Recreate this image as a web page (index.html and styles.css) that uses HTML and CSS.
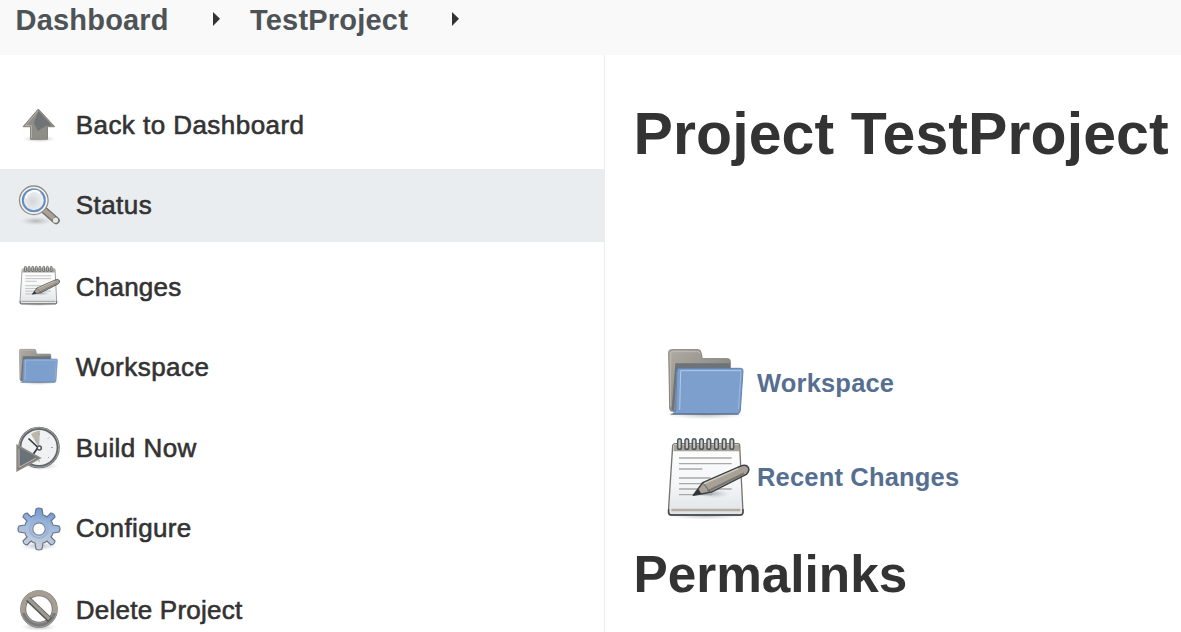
FILE: index.html
```html
<!DOCTYPE html>
<html lang="en">
<head>
<meta charset="utf-8">
<title>TestProject</title>
<link rel="stylesheet" href="styles.css">
</head>
<body>
<svg class="defs" width="0" height="0" aria-hidden="true">
  <defs>
    <linearGradient id="grey" x1="0" y1="0" x2="1" y2="1"><stop offset="0" stop-color="#b0aba1"/><stop offset="1" stop-color="#77787a"/></linearGradient>
    <linearGradient id="paper" x1="0" y1="0" x2="0" y2="1"><stop offset="0" stop-color="#ffffff"/><stop offset=".6" stop-color="#f3f5f7"/><stop offset="1" stop-color="#dfe3e6"/></linearGradient>
    <linearGradient id="gear" x1=".6" y1="0" x2=".4" y2="1"><stop offset="0" stop-color="#6f97cf"/><stop offset=".45" stop-color="#a3bbdc"/><stop offset="1" stop-color="#cfd3d8"/></linearGradient>
    <radialGradient id="glass" cx=".45" cy=".55" r=".6"><stop offset="0" stop-color="#d4d5d7"/><stop offset="1" stop-color="#f4f7fa"/></radialGradient>
    <radialGradient id="shade"><stop offset="0" stop-color="#8f969b" stop-opacity=".65"/><stop offset="1" stop-color="#b9c0c5" stop-opacity="0"/></radialGradient>
    <symbol id="folder" viewBox="45 36 246 220">
      <ellipse cx="167" cy="238" rx="122" ry="16" fill="url(#shade)"/>
      <path d="M56 52q0-8 8-8h80q8 0 9 8l4 19h76q8 0 8 8v150H67q-7 0-8-8z" fill="url(#grey)" stroke="#88857e" stroke-width="3"/>
      <path d="M62 215V56q0-6 6-6h75q5 0 6 6" fill="none" stroke="#cbc9c3" stroke-width="2"/>
      <path d="M76 85h164v25H80l-8 120-7-7z" fill="#6d7376"/>
      <path d="M88 100h184q8 0 7 9l-8 118q-1 9-9 9H68q8-1 9-12l4-116q0-8 7-8z" fill="#7c9fcd" stroke="#5c82b5" stroke-width="3"/>
      <path d="M89 225l3-118h181" fill="none" stroke="#c3d2e5" stroke-width="2.5"/>
      <path d="M273 109l-8 113" fill="none" stroke="#afc4df" stroke-width="2"/>
      <path d="M62 238h204" stroke="#525d69" stroke-width="2.5"/>
    </symbol>
    <symbol id="notepad" viewBox="45 34 258 250">
      <ellipse cx="165" cy="270" rx="115" ry="12" fill="url(#shade)"/>
      <path d="M74 54h190q5 0 5 6l10 199q0 9-8 9H63q-8 0-8-9L68 60q1-6 6-6z" fill="url(#paper)" stroke="#77736d" stroke-width="4"/>
      <path d="M56 250v9q0 9 8 9h207q8 0 8-9v-9" fill="none" stroke="#414446" stroke-width="4"/>
      <path d="M72 57h195l1 20H70z" fill="#a9a298"/>
      <path d="M64 253h207" stroke="#b3ada4" stroke-width="8"/>
      <g fill="#c9c8c4" stroke="#4e565a" stroke-width="4.5">
        <rect x="83" y="39" width="11" height="32" rx="5.5"/><rect x="105" y="39" width="11" height="32" rx="5.5"/><rect x="127" y="39" width="11" height="32" rx="5.5"/><rect x="149" y="39" width="11" height="32" rx="5.5"/><rect x="171" y="39" width="11" height="32" rx="5.5"/><rect x="194" y="39" width="11" height="32" rx="5.5"/><rect x="217" y="39" width="11" height="32" rx="5.5"/><rect x="240" y="39" width="11" height="32" rx="5.5"/>
      </g>
      <path d="M87 97h158M87 114h158M87 130h70M87 157h95M87 174h74M87 190h158M87 207h100" stroke="#aaa9a6" stroke-width="4"/>
      <ellipse cx="190" cy="204" rx="48" ry="14" fill="url(#shade)"/>
      <path d="M130 209l28-38 112-49q18-8 25 3 5 12-6 21l-106 54z" fill="#a8a196" stroke="#3b4145" stroke-width="4.5" stroke-linejoin="round"/>
      <path d="M161 175l104-46" stroke="#d0ccc4" stroke-width="4"/>
      <path d="M172 197l110-54" stroke="#777570" stroke-width="6"/>
      <path d="M130 209l15-19 9 14z" fill="#2f3438"/>
      <path d="M158 172q10 10 22 27" fill="none" stroke="#62615d" stroke-width="3"/>
    </symbol>
  </defs>
</svg>

<header class="breadcrumbs">
  <a class="crumb crumb-home">Dashboard</a>
  <svg class="caret" viewBox="0 0 7 14"><path d="M0 0l7 6.8L0 14z"/></svg>
  <a class="crumb crumb-project">TestProject</a>
  <svg class="caret" viewBox="0 0 7 14"><path d="M0 0l7 6.8L0 14z"/></svg>
</header>

<div class="page">
  <nav class="sidebar">
    <a class="task">
      <svg class="task-icon" viewBox="0 0 48 48">
        <ellipse cx="25" cy="38" rx="17" ry="3.5" fill="url(#shade)"/>
        <path d="M24.3 8L9 25.7h7.5v12.6h17V25.7h7.2z" fill="#8f8d88" stroke="#85827b"/>
        <path d="M24.3 10l13.5 14.5-6 .5-8 5-4-8z" fill="#656c72" opacity=".75"/>
        <path d="M24 10L11.5 24.7h6v12.5" fill="none" stroke="#b6b0a7"/>
      </svg>
      <span class="task-label">Back to Dashboard</span>
    </a>
    <a class="task task-active">
      <svg class="task-icon" viewBox="0 0 48 48">
        <ellipse cx="22" cy="39" rx="16" ry="4.5" fill="url(#shade)"/>
        <path d="M29.5 27.5L42 38.5" stroke="#77736d" stroke-width="7.5" stroke-linecap="round"/>
        <path d="M30 28l9.5 8" stroke="#aaa397" stroke-width="4.5"/>
        <circle cx="41.5" cy="38.2" r="2.6" fill="#e6e8e8"/>
        <circle cx="19.8" cy="18.3" r="14.3" fill="#f4f5f5" stroke="#918e88" stroke-width="1.3"/>
        <circle cx="19.8" cy="18.3" r="11" fill="url(#glass)" stroke="#668dbf" stroke-width="2"/>
        <path d="M12 16a8.5 8.5 0 0 1 14-5" fill="none" stroke="#fff" stroke-width="2"/>
      </svg>
      <span class="task-label">Status</span>
    </a>
    <a class="task">
      <svg class="task-icon" viewBox="0 0 48 48"><use href="#notepad" x="4" y="3.5" width="43" height="41"/></svg>
      <span class="task-label label-tight">Changes</span>
    </a>
    <a class="task">
      <svg class="task-icon" viewBox="0 0 48 48"><use href="#folder" x="3.5" y="5" width="42" height="37.5"/></svg>
      <span class="task-label">Workspace</span>
    </a>
    <a class="task">
      <svg class="task-icon" viewBox="0 0 48 48">
        <ellipse cx="27" cy="42" rx="18" ry="4" fill="url(#shade)"/>
        <circle cx="25" cy="23.5" r="19.2" fill="#eff1f2" stroke="#5f676b" stroke-width="3.2"/>
        <circle cx="25" cy="23.5" r="19.8" fill="none" stroke="#aaa59c" stroke-width="1"/>
        <path d="M25 24L17 10q7-4 9-3z" fill="#bcb7ae"/>
        <path d="M14.5 14.5L24 23.5l-5 7" fill="none" stroke="#353b3f" stroke-width="1.7"/>
        <circle cx="25.3" cy="24" r="2" fill="#fff" stroke="#4e5559" stroke-width="1.5"/>
        <path d="M25 9v2M39 23.5h-2M25 38v-2M35 13.5l-1 1M35 34l-1-1" stroke="#9fa3a5"/>
        <path d="M3.2 21.5v25L25.8 34z" fill="#687278" stroke="#8f887d" stroke-width="1.8"/>
        <path d="M5 24.5v18.8L22 34" fill="none" stroke="#c4bfb6" stroke-width="1"/>
      </svg>
      <span class="task-label">Build Now</span>
    </a>
    <a class="task">
      <svg class="task-icon" viewBox="0 0 48 48">
        <ellipse cx="25" cy="41" rx="19" ry="4.5" fill="url(#shade)"/>
        <path transform="translate(25 24)" d="M-3-20Q0-22 3-20L4-14Q6.5-13.5 8-12L12-16Q15.5-15.5 16-12L12-8Q13.5-6.5 14-4L20-3Q22 0 20 3L14 4Q13.5 6.5 12 8L16 12Q15.5 15.5 12 16L8 12Q6.5 13.5 4 14L3 20Q0 22-3 20L-4 14Q-6.5 13.5-8 12L-12 16Q-15.5 15.5-16 12L-12 8Q-13.5 6.5-14 4L-20 3Q-22 0-20-3L-14-4Q-13.5-6.5-12-8L-16-12Q-15.5-15.5-12-16L-8-12Q-6.5-13.5-4-14Z" fill="url(#gear)" stroke="#66758a" stroke-width="1.2"/>
        <circle cx="25" cy="24" r="9" fill="none" stroke="#9ab2d3" stroke-width="2"/>
        <circle cx="25" cy="24" r="6.2" fill="#fff" stroke="#77869a" stroke-width="1.2"/>
      </svg>
      <span class="task-label label-raised">Configure</span>
    </a>
    <a class="task">
      <svg class="task-icon" viewBox="0 0 48 48">
        <ellipse cx="25" cy="42" rx="18" ry="4" fill="url(#shade)"/>
        <circle cx="25" cy="24" r="15.8" fill="#fff" stroke="#74726e" stroke-width="6"/>
        <circle cx="25" cy="24" r="16" fill="none" stroke="#a69e93" stroke-width="4.8"/>
        <path d="M9.5 28a16 16 0 0 0 31 0" fill="none" stroke="#777b7d" stroke-width="3"/>
        <path d="M14 14l22 21" stroke="#4c5459" stroke-width="5.6"/>
        <path d="M14 13.5l21.5 20.5" stroke="#9f988d" stroke-width="3.5"/>
      </svg>
      <span class="task-label label-tight">Delete Project</span>
    </a>
  </nav>

  <main class="content">
    <h1 class="title">Project TestProject</h1>
    <div class="links">
      <a class="link">
        <svg class="link-icon folder-icon"><use href="#folder" width="82" height="73.3"/></svg>
        <span>Workspace</span>
      </a>
      <a class="link link-changes">
        <svg class="link-icon notepad-icon"><use href="#notepad" width="86" height="83.3"/></svg>
        <span>Recent Changes</span>
      </a>
    </div>
    <h2 class="subtitle">Permalinks</h2>
  </main>
</div>
</body>
</html>
```
FILE: styles.css
```css
* {
  box-sizing: border-box;
}

body {
  margin: 0;
  height: 632px;
  overflow: hidden;
  display: flex;
  flex-direction: column;
  background: #fff;
  color: #333;
  font-family: "Liberation Sans", Arial, sans-serif;
}

.defs {
  position: absolute;
}

.breadcrumbs {
  flex: none;
  display: flex;
  align-items: flex-start;
  height: 55px;
  padding-left: 15.5px;
  background: #f9f9f9;
}

.crumb {
  margin-top: 3px;
  font-size: 29px;
  line-height: 34px;
  letter-spacing: 0.2px;
  font-weight: bold;
  color: #4d5356;
}

.crumb-home {
  width: 197px;
}

.crumb-project {
  width: 202px;
  margin-left: 30.5px;
}

.caret {
  width: 7px;
  height: 14px;
  margin-top: 12px;
  fill: #333;
}

.page {
  flex: 1;
  min-height: 0;
  display: flex;
}

.sidebar {
  flex: none;
  width: 605px;
  display: flex;
  flex-direction: column;
  gap: 7.75px;
  padding-top: 33.25px;
  border-right: 1.5px solid #e9edf0;
}

.task {
  flex: none;
  display: flex;
  align-items: center;
  gap: 13.7px;
  height: 73px;
  padding-left: 14px;
}

.task-active {
  background: #eaedf0;
}

.task-icon {
  flex: none;
  width: 48px;
  height: 48px;
}

.task-label {
  font-size: 26px;
  line-height: 30px;
  letter-spacing: 0.45px;
  -webkit-text-stroke: 0.6px #333;
}

.task-active .task-label,
.label-raised {
  padding-bottom: 2px;
}

.label-tight {
  padding-top: 2px;
  letter-spacing: 0.25px;
}

.label-raised {
  letter-spacing: 0.35px;
}

.content {
  flex: 1;
  padding-left: 28.5px;
}

.title {
  margin: 45px 0 0;
  font-size: 59px;
  line-height: 68px;
  letter-spacing: 0.1px;
  white-space: nowrap;
}

.links {
  display: flex;
  flex-direction: column;
  gap: 17px;
  margin-top: 179px;
  padding-left: 31.5px;
}

.link {
  display: flex;
  align-items: center;
  height: 73px;
  font-size: 25.5px;
  letter-spacing: 0.18px;
  font-weight: bold;
  color: #566f91;
}

.link-icon {
  flex: none;
}

.folder-icon {
  width: 92px;
  height: 73px;
}

.link-changes {
  height: 83px;
}

.link-changes span {
  padding-bottom: 2px;
}

.notepad-icon {
  width: 92px;
  height: 83px;
}

.subtitle {
  margin: 25px 0 0;
  font-size: 51.3px;
  line-height: 60px;
}
```
